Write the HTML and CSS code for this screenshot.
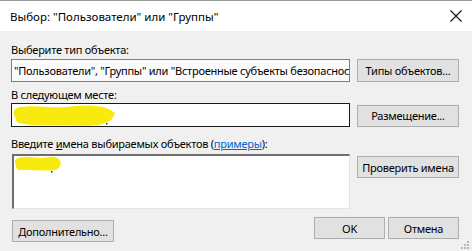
FILE: index.html
```html
<html lang="ru">
<head>
  <meta charset="UTF-8">
  <meta name="viewport" content="width=device-width, initial-scale=1.0">
  <title>Выбор: "Пользователи" или "Группы"</title>
  <link rel="stylesheet" href="styles.css">
</head>
<body>
  <div class="window">
    <div class="titlebar">
      <span class="title">Выбор: "Пользователи" или "Группы"</span>
      <svg class="close" width="12" height="12" viewBox="0 0 12 12">
        <path d="M0.5 0.5 L11.5 11.5 M11.5 0.5 L0.5 11.5" stroke="#111" stroke-width="1.1" fill="none"/>
      </svg>
    </div>

    <div class="dialog">
      <div class="label first">Выберите тип объекта:</div>
      <div class="row">
        <div class="field readonly">"Пользователи", "Группы" или "Встроенные субъекты безопасности"</div>
        <button class="btn">Типы объектов...</button>
      </div>

      <div class="label second">В следующем месте:</div>
      <div class="row center">
        <div class="field active">
          <svg class="scribble" width="110" height="24" viewBox="0 0 110 24">
            <path d="M7 9 C 20 5, 40 11, 60 8 C 75 6, 90 7, 96 11 C 94 15, 80 17, 60 16 C 40 15, 22 17, 9 14" stroke="#f7ea0c" stroke-width="11" fill="none" stroke-linecap="round"/>
            <rect x="94" y="19" width="1.5" height="1.5" fill="#333"/>
          </svg>
        </div>
        <button class="btn">Размещение...</button>
      </div>

      <div class="label third">Введите <u>и</u>мена выбираемых объектов (<a href="#" class="link">примеры</a>):</div>
      <div class="row top">
        <div class="names">
          <svg class="scribble" width="50" height="20" viewBox="0 0 50 20">
            <path d="M5 6 C 15 3, 25 8, 35 5 C 42 4, 45 7, 41 10 C 30 12, 18 9, 6 10" stroke="#f7ea0c" stroke-width="8" fill="none" stroke-linecap="round"/>
            <rect x="37" y="15" width="1.5" height="1.5" fill="#333"/>
          </svg>
        </div>
        <button class="btn check">Проверить имена</button>
      </div>

      <div class="footer">
        <button class="btn advanced">Дополнительно...</button>
        <div class="actions">
          <button class="btn small-btn">OK</button>
          <button class="btn small-btn">Отмена</button>
        </div>
      </div>
    </div>

    <svg class="grip" width="9" height="9" viewBox="0 0 9 9">
      <rect x="6" y="0" width="2" height="2" fill="#b8b8b8"/>
      <rect x="3" y="3" width="2" height="2" fill="#b8b8b8"/>
      <rect x="6" y="3" width="2" height="2" fill="#b8b8b8"/>
      <rect x="0" y="6" width="2" height="2" fill="#b8b8b8"/>
      <rect x="3" y="6" width="2" height="2" fill="#b8b8b8"/>
      <rect x="6" y="6" width="2" height="2" fill="#b8b8b8"/>
    </svg>
  </div>
</body>
</html>
```

FILE: styles.css
```css
body {
  margin: 0;
  background: #f0f0f0;
  font-family: "Noto Sans", "Open Sans", sans-serif;
  font-size: 11px;
  letter-spacing: -0.25px;
  color: #000;
}

.window {
  position: relative;
  width: 472px;
  height: 251px;
  overflow: hidden;
  background: #f0f0f0;
}

.titlebar {
  height: 30px;
  border-top: 1px solid #9a9a9a;
  background: #fff;
  display: flex;
  align-items: center;
  justify-content: space-between;
  padding: 0 9px 0 10px;
}

.title {
  font-size: 11.5px;
  letter-spacing: 0;
}

.close {
  margin-right: 1px;
}

.dialog {
  padding: 0 13px 0 11px;
}

.label {
  line-height: 14px;
  white-space: nowrap;
}

.label.first {
  margin-top: 12px;
}

.label.second {
  margin-top: 6px;
}

.label.third {
  margin-top: 10px;
}

.link {
  color: #0066cc;
}

.row {
  display: flex;
  gap: 7px;
  margin-top: 2px;
}

.row.center {
  align-items: center;
  margin-top: 1px;
}

.row.top {
  align-items: flex-start;
  margin-top: 3px;
}

.field {
  position: relative;
  width: 339px;
  box-sizing: border-box;
  white-space: nowrap;
  overflow: hidden;
  padding: 0 2px;
}

.field.readonly {
  height: 23px;
  line-height: 21px;
  border: 1px solid #7f7f7f;
  background: #fbfbfb;
}

.field.active {
  height: 24px;
  border: 1px solid #1a1a1a;
  background: #fff;
}

.names {
  position: relative;
  width: 338px;
  height: 55px;
  margin-left: 1px;
  box-sizing: border-box;
  background: #fff;
  border-top: 2px solid #6e6e6e;
  border-left: 2px solid #6e6e6e;
  border-right: 1px solid #e4e4e4;
  border-bottom: 1px solid #e4e4e4;
}

.scribble {
  position: absolute;
  left: 0;
  top: 0;
}

.btn {
  font-family: inherit;
  font-size: 11px;
  letter-spacing: -0.25px;
  color: #000;
  background: #e1e1e1;
  border: 1px solid #adadad;
  width: 102px;
  height: 23px;
  padding: 0;
  box-sizing: border-box;
}

.row.center .btn {
  height: 22px;
  margin-top: 1px;
}

.check {
  margin-top: 2px;
  height: 22px;
}

.footer {
  display: flex;
  justify-content: space-between;
  align-items: flex-start;
  margin-top: 8px;
}

.advanced {
  margin-top: 3px;
  margin-left: 1px;
  height: 22px;
}

.actions {
  display: flex;
  gap: 3px;
}

.small-btn {
  width: 71px;
  height: 22px;
}

.grip {
  position: absolute;
  right: 2px;
  bottom: 1px;
}
```
